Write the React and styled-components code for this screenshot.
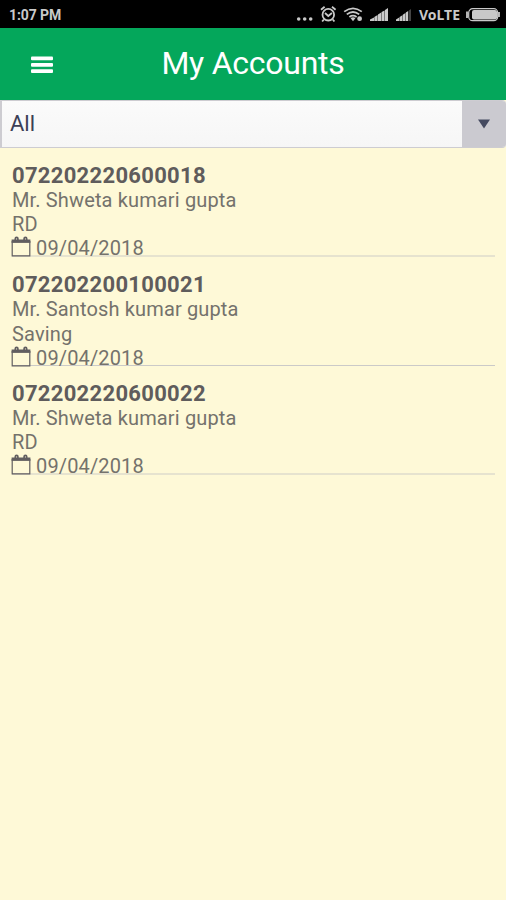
import React from "react";
import styled, { createGlobalStyle } from "styled-components";

const GlobalStyle = createGlobalStyle`
  * { box-sizing: border-box; }
  body { margin: 0; background: #fef9d7; font-family: Roboto, "Noto Sans", sans-serif; }
`;

const Screen = styled.div`
  display: flex;
  flex-direction: column;
  height: 900px;
  overflow: hidden;
  background: #fef9d7;
`;

const StatusBar = styled.div`
  display: flex;
  justify-content: space-between;
  height: 28px;
  padding: 0 6px 0 9px;
  background: #000;
  color: #c9c9c9;
`;

const Clock = styled.span`
  font-size: 14px;
  font-weight: 700;
  line-height: 30px;
  letter-spacing: -0.1px;
`;

const StatusIcons = styled.svg`
  display: block;
  width: 204px;
  height: 28px;
  fill: #c9c9c9;
`;

const Header = styled.header`
  display: grid;
  grid-template-columns: 83px 1fr 83px;
  align-items: center;
  height: 72px;
  background: #04a75b;
  color: #fff;
`;

const MenuButton = styled.button`
  display: flex;
  padding: 1px 0 0 31px;
  border: 0;
  background: none;
`;

const Title = styled.h1`
  margin: 0 0 2px;
  font-size: 32px;
  font-weight: 400;
  line-height: 40px;
  letter-spacing: -0.25px;
  text-align: center;
  white-space: nowrap;
`;

const Select = styled.div`
  display: flex;
  height: 48px;
  border: solid #cdccd1;
  border-width: 1px 0 1px 2px;
  border-radius: 0 4px 4px 0;
  background: linear-gradient(#fbfbfb, #f6f6f6);
  overflow: hidden;
`;

const SelectValue = styled.span`
  flex: 1;
  padding-left: 8px;
  font-size: 22px;
  line-height: 45px;
  color: #3c3f56;
`;

const SelectArrow = styled.span`
  display: flex;
  align-items: center;
  justify-content: center;
  width: 44px;
  background: #cbcad0;
`;

const AccountList = styled.ul`
  margin: 0;
  padding: 0 11px 0 12px;
  list-style: none;
`;

const AccountRow = styled.li`
  height: 109px;
  padding-top: 15px;
  border-bottom: ${({ $soft }) => ($soft ? "2px solid #e6e3cf" : "1px solid #cbcac8")};
  color: #74726c;
`;

const AccountNumber = styled.div`
  height: 25px;
  font-size: 22px;
  font-weight: 700;
  line-height: 26px;
  letter-spacing: 0.3px;
  color: #5f5c5c;
`;

const AccountLine = styled.div`
  display: flex;
  height: 24px;
  font-size: 20px;
  line-height: 24px;
  letter-spacing: 0.14px;
  white-space: nowrap;
`;

const AccountType = styled(AccountLine)`
  height: ${({ $tall }) => ($tall ? 25 : 24)}px;
  line-height: ${({ $tall }) => ($tall ? 26 : 24)}px;
`;

const CalendarIcon = styled.svg`
  flex: none;
  width: 20px;
  height: 21px;
  margin: 0 5px 0 -1px;
`;

const accounts = [
  { number: "072202220600018", name: "Mr. Shweta kumari gupta", type: "RD", date: "09/04/2018" },
  { number: "072202200100021", name: "Mr. Santosh kumar gupta", type: "Saving", date: "09/04/2018" },
  { number: "072202220600022", name: "Mr. Shweta kumari gupta", type: "RD", date: "09/04/2018" },
];

function StatusGlyphs() {
  return (
    <StatusIcons viewBox="296 0 204 28">
      <circle cx="298.7" cy="19" r="1.8" />
      <circle cx="304.7" cy="19" r="1.8" />
      <circle cx="310.7" cy="19" r="1.8" />
      <g fill="none" stroke="#c9c9c9" strokeWidth="1.8">
        <circle cx="328.3" cy="14.7" r="5.8" />
        <path d="M321 9.8l3.6-3M335.6 9.8l-3.6-3M325 13l3.3 3 3.6-3M323.8 19.5l-1.6 2M332.8 19.5l1.6 2" />
        <path d="M344.2 11.6q8.8-6.6 17.6 0M346.8 14.4q6.2-4.8 12.4 0M349.4 17q3.6-2.6 7.2 0" />
      </g>
      <path d="M350.5 18q2.5-1.5 5 0l-2.5 3.2z" />
      <circle cx="359.6" cy="18.7" r="2.4" />
      <path d="M370 21v-1.5l4-2V21zM374.3 21v-4l3.3-2v6zM378 21v-6.5l3.2-2V21zM381.6 21v-9l3-1.6V21zM385 21V10l3-2v13z" />
      <path d="M396 21v-1.5l3.2-2V21zM399.6 21v-4l2.8-1.8V21zM402.8 21v-6.2l2.6-1.7V21zM405.8 21v-8.4l2.4-1.5V21z" />
      <path d="M408.8 21V10.6l2.2-1.6v12z" fill="#444" />
      <text x="419" y="19.5" fontFamily="Noto Sans, sans-serif" fontSize="13.5" fontWeight="700" textLength="41" lengthAdjust="spacingAndGlyphs">VoLTE</text>
      <rect x="468.7" y="8.7" width="29" height="12" rx="4" fill="none" stroke="#c9c9c9" strokeWidth="1.2" />
      <path d="M467 11.5v6.5" stroke="#c9c9c9" strokeWidth="1.8" />
      <rect x="472" y="10" width="25" height="9.5" rx="2" />
      <path d="M499 12v5" stroke="#c9c9c9" strokeWidth="1.8" />
    </StatusIcons>
  );
}

function Calendar() {
  return (
    <CalendarIcon viewBox="0 0 20 21" fill="none" stroke="#615e60">
      <path d="M1.2 5v14.8h17.6V5" strokeWidth="1.2" />
      <path d="M.6 5.2h18.8" strokeWidth="3.4" />
      <path d="M4.3 5V2.8q0-1.4 1.3-1.4t1.3 1.4V5M13.1 5V2.8q0-1.4 1.3-1.4t1.3 1.4V5" strokeWidth="1.7" />
    </CalendarIcon>
  );
}

export default function App() {
  return (
    <Screen>
      <GlobalStyle />
      <StatusBar>
        <Clock>1:07 PM</Clock>
        <StatusGlyphs />
      </StatusBar>
      <Header>
        <MenuButton aria-label="Menu">
          <svg width="22" height="18" fill="#fff">
            <rect y="0.5" width="22" height="3.8" rx="1" />
            <rect y="7" width="22" height="3.8" rx="1" />
            <rect y="13.3" width="22" height="3.8" rx="1" />
          </svg>
        </MenuButton>
        <Title>My Accounts</Title>
      </Header>
      <Select>
        <SelectValue>All</SelectValue>
        <SelectArrow>
          <svg width="12" height="10" fill="#454a60"><path d="M0 .5h12L6 9.5z" /></svg>
        </SelectArrow>
      </Select>
      <AccountList>
        {accounts.map((account, index) => (
          <AccountRow key={account.number} $soft={index % 2 === 0}>
            <AccountNumber>{account.number}</AccountNumber>
            <AccountLine>{account.name}</AccountLine>
            <AccountType $tall={account.type === "Saving"}>{account.type}</AccountType>
            <AccountLine><Calendar />{account.date}</AccountLine>
          </AccountRow>
        ))}
      </AccountList>
    </Screen>
  );
}
